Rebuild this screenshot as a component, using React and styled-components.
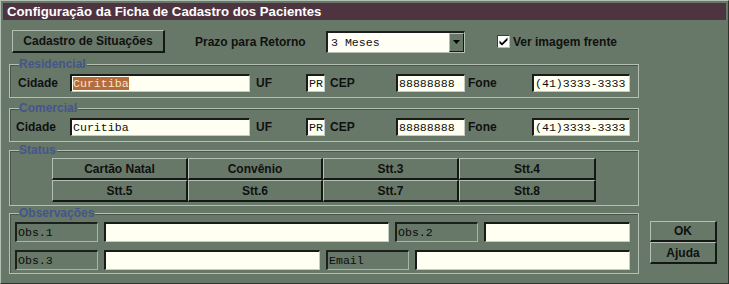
import React from "react";
import styled, { createGlobalStyle } from "styled-components";

const GlobalStyle = createGlobalStyle`
  html, body {
    margin: 0;
    padding: 0;
    background: #687868;
  }
  * {
    box-sizing: border-box;
  }
`;

const BG = "#687868";
const LIGHT = "#b4c0b4";
const DARK = "#141814";

const Window = styled.div`
  width: 729px;
  height: 284px;
  background: ${BG};
  border-top: 1px solid ${LIGHT};
  border-left: 1px solid ${LIGHT};
  border-right: 1px solid #2c342c;
  border-bottom: 1px solid #2c342c;
  padding: 2px 2px 0 2px;
  font-family: "Liberation Sans", Arial, sans-serif;
  display: flex;
  flex-direction: column;
`;

const TitleBar = styled.div`
  height: 17px;
  background: #4e3441;
  color: #ffffff;
  font-weight: bold;
  font-size: 13.2px;
  line-height: 17px;
  padding-left: 4px;
  white-space: nowrap;
`;

const Content = styled.div`
  padding: 0 0 0 6px;
  display: flex;
  flex-direction: column;
`;

const TopRow = styled.div`
  margin-top: 10px;
  padding-left: 3px;
  height: 23px;
  display: flex;
  align-items: center;
`;

const RaisedButton = styled.button`
  width: ${({ w }) => w}px;
  height: ${({ h }) => h || 23}px;
  background: ${BG};
  border-top: 1px solid ${LIGHT};
  border-left: 1px solid ${LIGHT};
  border-right: 2px solid ${DARK};
  border-bottom: 2px solid ${DARK};
  font-family: "Liberation Sans", Arial, sans-serif;
  font-weight: bold;
  font-size: 12px;
  color: #101010;
  padding: 0;
  margin: 0;
  white-space: nowrap;
`;

const Label = styled.span`
  font-weight: bold;
  font-size: 12px;
  color: #101010;
  white-space: nowrap;
  margin-left: ${({ ml }) => ml || 0}px;
  width: ${({ w }) => (w ? `${w}px` : "auto")};
  flex: none;
`;

const Select = styled.div`
  margin-left: 20px;
  width: 139px;
  height: 22px;
  display: flex;
  background: #fffff6;
  border-top: 2px solid #1c201c;
  border-left: 2px solid #1c201c;
  border-right: 1px solid ${LIGHT};
  border-bottom: 1px solid ${LIGHT};
`;

const SelectText = styled.div`
  flex: 1;
  font-family: "Liberation Mono", "Courier New", monospace;
  font-size: 11.6px;
  line-height: 19px;
  padding-left: 3px;
  color: #101010;
`;

const SelectArrow = styled.div`
  width: 15px;
  background: ${BG};
  border-top: 1px solid ${LIGHT};
  border-left: 1px solid ${LIGHT};
  border-right: 1px solid ${DARK};
  border-bottom: 1px solid ${DARK};
  display: flex;
  align-items: center;
  justify-content: center;
`;

const CheckWrap = styled.label`
  margin-left: 32px;
  display: flex;
  align-items: center;
  gap: 3px;
`;

const CheckBox = styled.span`
  width: 13px;
  height: 13px;
  background: #ffffff;
  border-top: 1px solid #3a403a;
  border-left: 1px solid #3a403a;
  border-right: 1px solid ${LIGHT};
  border-bottom: 1px solid ${LIGHT};
  display: flex;
  align-items: center;
  justify-content: center;
`;

const Group = styled.div`
  position: relative;
  width: 630px;
  height: ${({ h }) => h}px;
  margin-top: ${({ mt }) => mt}px;
  border: 1px solid ${LIGHT};
  box-shadow: inset 1px 1px 0 #4a564a;
  padding: ${({ pad }) => pad};
`;

const Legend = styled.span`
  position: absolute;
  top: -8px;
  left: 9px;
  background: ${BG};
  color: #44558c;
  font-weight: bold;
  font-size: 12px;
  line-height: 14px;
  padding-right: 1px;
`;

const AddressRow = styled.div`
  display: flex;
  align-items: center;
  padding-left: ${({ pl }) => pl}px;
`;

const TextBox = styled.div`
  width: ${({ w }) => w}px;
  height: ${({ h }) => h || 18}px;
  flex: none;
  background: #fffff2;
  border-top: 2px solid #181c18;
  border-left: 2px solid #181c18;
  border-right: 1px solid #c4ccc4;
  border-bottom: 1px solid #c4ccc4;
  font-family: "Liberation Mono", "Courier New", monospace;
  font-size: 11.6px;
  line-height: 15px;
  color: #101010;
  padding-left: 1px;
  white-space: nowrap;
  overflow: hidden;
`;

const Selected = styled.span`
  background: #b46c3c;
  color: #f4e4c8;
`;

const StatusGrid = styled.div`
  margin-left: 42px;
  display: grid;
  grid-template-columns: 136px 135px 136px 137px;
  grid-auto-rows: 22px;
`;

const StatusButton = styled.div`
  background: ${BG};
  border-top: 1px solid ${LIGHT};
  border-left: 1px solid ${LIGHT};
  border-right: 2px solid ${DARK};
  border-bottom: 2px solid ${DARK};
  font-weight: bold;
  font-size: 12px;
  color: #101010;
  display: flex;
  align-items: center;
  justify-content: center;
`;

const BottomRow = styled.div`
  display: flex;
  align-items: flex-start;
`;

const ObsRows = styled.div`
  display: flex;
  flex-direction: column;
  gap: 8px;
  padding-left: 5px;
`;

const ObsRow = styled.div`
  display: flex;
  gap: 6px;
`;

const ObsLabel = styled.div`
  width: 83px;
  height: 20px;
  flex: none;
  border-top: 2px solid #1c201c;
  border-left: 2px solid #1c201c;
  border-right: 1px solid #a8b4a8;
  border-bottom: 1px solid #a8b4a8;
  font-family: "Liberation Mono", "Courier New", monospace;
  font-size: 11.6px;
  line-height: 17px;
  padding-left: 1px;
  color: #0c0c0c;
`;

const SideButtons = styled.div`
  margin-left: 11px;
  margin-top: 15px;
  display: flex;
  flex-direction: column;
`;

const statuses = ["Cartão Natal", "Convênio", "Stt.3", "Stt.4", "Stt.5", "Stt.6", "Stt.7", "Stt.8"];

function Address({ legend, mt, selected, pl }) {
  return (
    <Group h={34} mt={mt} pad="9px 0 0 0">
      <Legend>{legend}</Legend>
      <AddressRow pl={pl}>
        <Label w={60 - pl}>Cidade</Label>
        <TextBox w={180}>{selected ? <Selected>Curitiba</Selected> : "Curitiba"}</TextBox>
        <Label w={50} ml={6}>UF</Label>
        <TextBox w={19}>PR</TextBox>
        <Label w={66} ml={5}>CEP</Label>
        <TextBox w={69}>88888888</TextBox>
        <Label w={64} ml={3}>Fone</Label>
        <TextBox w={98}>(41)3333-3333</TextBox>
      </AddressRow>
    </Group>
  );
}

export default function App() {
  return (
    <>
      <GlobalStyle />
      <Window>
        <TitleBar>Configuração da Ficha de Cadastro dos Pacientes</TitleBar>
        <Content>
          <TopRow>
            <RaisedButton w={153}>Cadastro de Situações</RaisedButton>
            <Label ml={30} w={111}>Prazo para Retorno</Label>
            <Select>
              <SelectText>3 Meses</SelectText>
              <SelectArrow>
                <svg width="7" height="4" viewBox="0 0 7 4">
                  <path d="M0 0h7L3.5 4z" fill="#000" />
                </svg>
              </SelectArrow>
            </Select>
            <CheckWrap>
              <CheckBox>
                <svg width="9" height="9" viewBox="0 0 9 9">
                  <path d="M0.5 3.6l2.5 2.4L8.5 0.6v2.6L3 8.6 0.5 6.2z" fill="#000" />
                </svg>
              </CheckBox>
              <Label>Ver imagem frente</Label>
            </CheckWrap>
          </TopRow>

          <Address legend="Residencial" mt={11} selected pl={8} />
          <Address legend="Comercial" mt={10} pl={6} />

          <Group h={56} mt={8} pad="7px 0 0 0">
            <Legend>Status</Legend>
            <StatusGrid>
              {statuses.map((s) => (
                <StatusButton key={s}>{s}</StatusButton>
              ))}
            </StatusGrid>
          </Group>

          <BottomRow>
            <Group h={61} mt={7} pad="8px 0 0 0">
              <Legend>Observações</Legend>
              <ObsRows>
                <ObsRow>
                  <ObsLabel>Obs.1</ObsLabel>
                  <TextBox w={285} h={20} />
                  <ObsLabel>Obs.2</ObsLabel>
                  <TextBox w={146} h={20} />
                </ObsRow>
                <ObsRow>
                  <ObsLabel>Obs.3</ObsLabel>
                  <TextBox w={216} h={20} />
                  <ObsLabel>Email</ObsLabel>
                  <TextBox w={215} h={20} />
                </ObsRow>
              </ObsRows>
            </Group>
            <SideButtons>
              <RaisedButton w={67} h={21}>OK</RaisedButton>
              <RaisedButton w={67} h={22}>Ajuda</RaisedButton>
            </SideButtons>
          </BottomRow>
        </Content>
      </Window>
    </>
  );
}
